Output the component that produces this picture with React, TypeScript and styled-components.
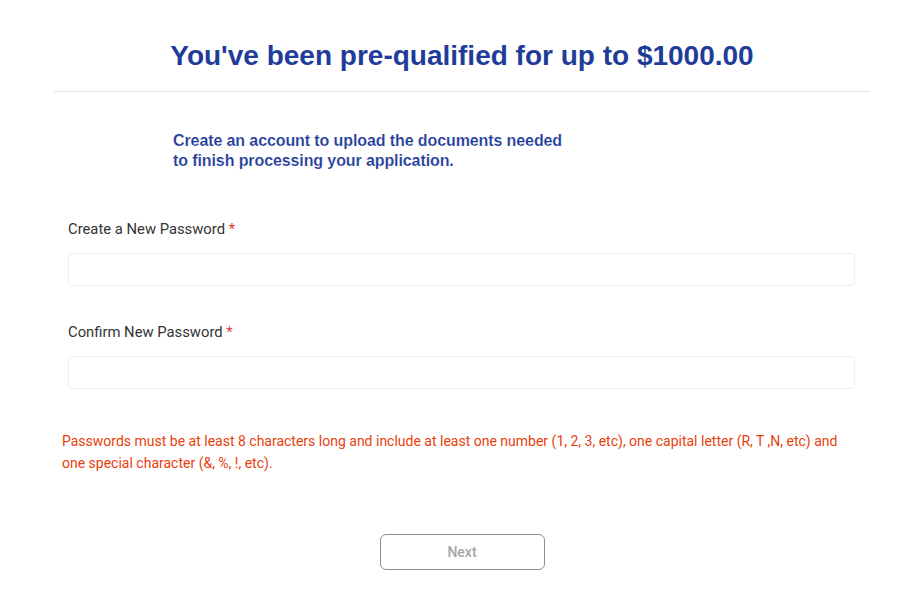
import React from 'react'
import styled, { createGlobalStyle } from 'styled-components'

const GlobalStyle = createGlobalStyle`
  body {
    margin: 0;
    background: #ffffff;
    font-family: Roboto, "Liberation Sans", Arial, sans-serif;
  }
`

const Page = styled.div`
  width: 924px;
  padding-top: 39px;
`

const Header = styled.div`
  margin: 0 54px;
  padding-bottom: 18px;
  border-bottom: 1px solid #e4e4e4;
  text-align: center;
`

const Title = styled.h1`
  margin: 0;
  color: #1f3c99;
  font-family: "Liberation Sans", Arial, sans-serif;
  font-size: 28px;
  font-weight: 700;
  line-height: 34px;
`

const Intro = styled.p`
  margin: 39px 0 0 173px;
  width: 400px;
  color: #1f3c99;
  font-family: "Liberation Sans", Arial, sans-serif;
  font-size: 16px;
  font-weight: 700;
  line-height: 20px;
  letter-spacing: -0.1px;
  -webkit-text-stroke: 0.15px #ffffff;
`

const Form = styled.div`
  margin: 48px 69px 0 68px;
  display: flex;
  flex-direction: column;
`

const Field = styled.div`
  display: flex;
  flex-direction: column;
  margin-bottom: 36px;
`

const Label = styled.label`
  color: #333333;
  font-size: 14.8px;
  line-height: 20px;
  margin-bottom: 14px;
`

const Required = styled.span`
  color: #e53b2a;
`

const Input = styled.input`
  height: 33px;
  box-sizing: border-box;
  border: 1px solid #eeeeee;
  border-radius: 4px;
  background: #ffffff;
  outline: none;
  padding: 0 10px;
  font-family: Roboto, sans-serif;
  font-size: 14px;
`

const Hint = styled.p`
  margin: 5px 0 0 62px;
  width: 800px;
  color: #e8400c;
  font-size: 14px;
  line-height: 22px;
`

const Actions = styled.div`
  display: flex;
  justify-content: center;
  margin-top: 60px;
`

const NextButton = styled.button`
  width: 165px;
  height: 36px;
  border: 1px solid #8c8c8c;
  border-radius: 6px;
  background: #ffffff;
  color: #a6a6a6;
  font-family: Roboto, sans-serif;
  font-size: 14px;
  font-weight: 500;
  cursor: pointer;
`

const App: React.FC = () => {
  return (
    <>
      <GlobalStyle />
      <Page>
        <Header>
          <Title>You've been pre-qualified for up to $1000.00</Title>
        </Header>
        <Intro>
          Create an account to upload the documents needed to finish processing your application.
        </Intro>
        <Form>
          <Field>
            <Label>
              Create a New Password <Required>*</Required>
            </Label>
            <Input type="password" />
          </Field>
          <Field>
            <Label>
              Confirm New Password <Required>*</Required>
            </Label>
            <Input type="password" />
          </Field>
        </Form>
        <Hint>
          Passwords must be at least 8 characters long and include at least one number (1, 2, 3, etc), one capital letter (R, T ,N, etc) and one special character (&amp;, %, !, etc).
        </Hint>
        <Actions>
          <NextButton>Next</NextButton>
        </Actions>
      </Page>
    </>
  )
}

export default App
